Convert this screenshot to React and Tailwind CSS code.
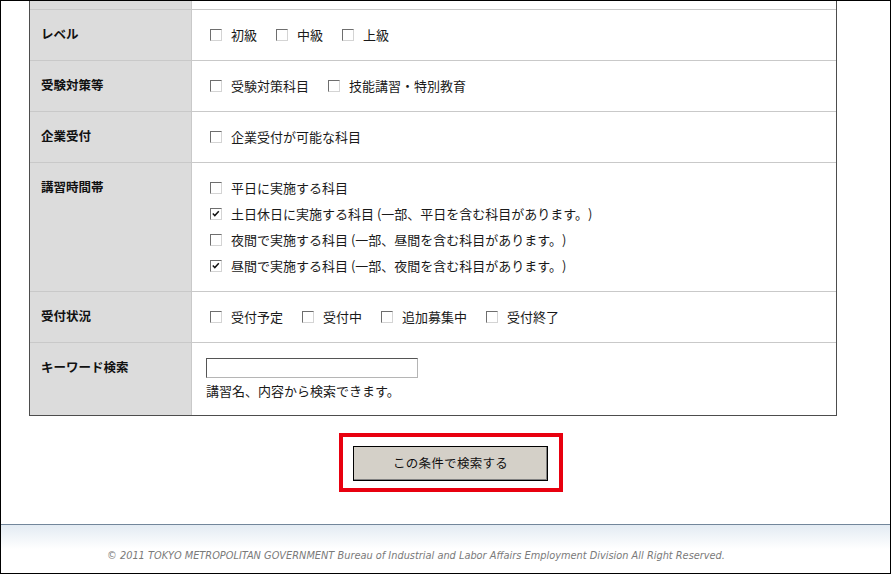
import React from "react";

const jp = { fontFamily: '"Noto Sans CJK JP", "Noto Sans", sans-serif' };

function Box({ checked }) {
  return (
    <span className="relative inline-block w-[12px] h-[12px] shrink-0 bg-white border border-t-[#6e6e6e] border-l-[#6e6e6e] border-b-[#d4d4d4] border-r-[#d4d4d4]">
      {checked && (
        <svg viewBox="0 0 10 10" className="absolute left-[1px] top-[1px] w-[8px] h-[8px]">
          <path d="M1 4.5 L3.5 7 L8.5 1.5" fill="none" stroke="#111" strokeWidth="1.8" />
        </svg>
      )}
    </span>
  );
}

function Check({ label, checked }) {
  return (
    <span className="inline-flex items-center mr-[15px]">
      <span className="ml-[4px] mr-[9px] flex items-center">
        <Box checked={checked} />
      </span>
      <span>{label}</span>
    </span>
  );
}

function Row({ label, children, pad = "py-[12px]" }) {
  return (
    <div className="flex border-t border-[#c9c9c9]">
      <div className="w-[162px] shrink-0 bg-[#dcdcdc] border-r border-[#c9c9c9] pl-[11px] pt-[11px] leading-[26px] text-[12.5px] font-bold text-[#111]">
        {label}
      </div>
      <div className={`flex-1 pl-[14px] ${pad} leading-[26px] text-[13px] text-[#1a1a1a]`}>
        {children}
      </div>
    </div>
  );
}

export default function App() {
  return (
    <div
      className="w-[891px] h-[574px] border border-black bg-white flex flex-col overflow-hidden box-border [text-spacing-trim:space-all]"
      style={jp}
    >
      <div className="ml-[28px] w-[808px] border-x border-b border-[#4d4d4d]">
        <div className="flex h-[8px]">
          <div className="w-[162px] bg-[#dcdcdc] border-r border-[#c9c9c9]" />
          <div className="flex-1" />
        </div>
        <Row label="レベル">
          <div className="flex">
            <Check label="初級" />
            <Check label="中級" />
            <Check label="上級" />
          </div>
        </Row>
        <Row label="受験対策等">
          <div className="flex">
            <Check label="受験対策科目" />
            <Check label="技能講習・特別教育" />
          </div>
        </Row>
        <Row label="企業受付">
          <div className="flex">
            <Check label="企業受付が可能な科目" />
          </div>
        </Row>
        <Row label="講習時間帯">
          <div className="flex flex-col">
            <div className="flex"><Check label="平日に実施する科目" /></div>
            <div className="flex"><Check label="土日休日に実施する科目 (一部、平日を含む科目があります。)" checked /></div>
            <div className="flex"><Check label="夜間で実施する科目 (一部、昼間を含む科目があります。)" /></div>
            <div className="flex"><Check label="昼間で実施する科目 (一部、夜間を含む科目があります。)" checked /></div>
          </div>
        </Row>
        <Row label="受付状況">
          <div className="flex">
            <Check label="受付予定" />
            <Check label="受付中" />
            <Check label="追加募集中" />
            <Check label="受付終了" />
          </div>
        </Row>
        <Row label="キーワード検索" pad="pt-[15px] pb-[15px]">
          <div className="w-[212px] h-[20px] bg-white border border-[#b5b5b5] border-t-[#555] border-l-[#555]" />
          <div className="mt-[4px] leading-[18px]">講習名、内容から検索できます。</div>
        </Row>
      </div>

      <div className="mt-[17px] ml-[338px] w-[224px] h-[59px] border-4 border-[#e8000f] pl-[10px] pt-[9px]">
        <div className="w-[195px] h-[35px] bg-[#d4d0c8] border border-black shadow-[inset_-1px_-1px_0_#808080] flex items-center justify-center text-[12.5px] tracking-[0.3px] text-[#111]">
          この条件で検索する
        </div>
      </div>

      <div className="mt-[32px] flex-1 border-t border-[#72869b] bg-gradient-to-b from-[#e3ebf3] via-white to-white">
        <div
          className="pl-[106px] pt-[24px] text-[9.8px] leading-[13px] italic text-[#7a7a7a]"
          style={{ fontFamily: '"DejaVu Sans", sans-serif' }}
        >
          © 2011 TOKYO METROPOLITAN GOVERNMENT Bureau of Industrial and Labor Affairs Employment Division All Right Reserved.
        </div>
      </div>
    </div>
  );
}
